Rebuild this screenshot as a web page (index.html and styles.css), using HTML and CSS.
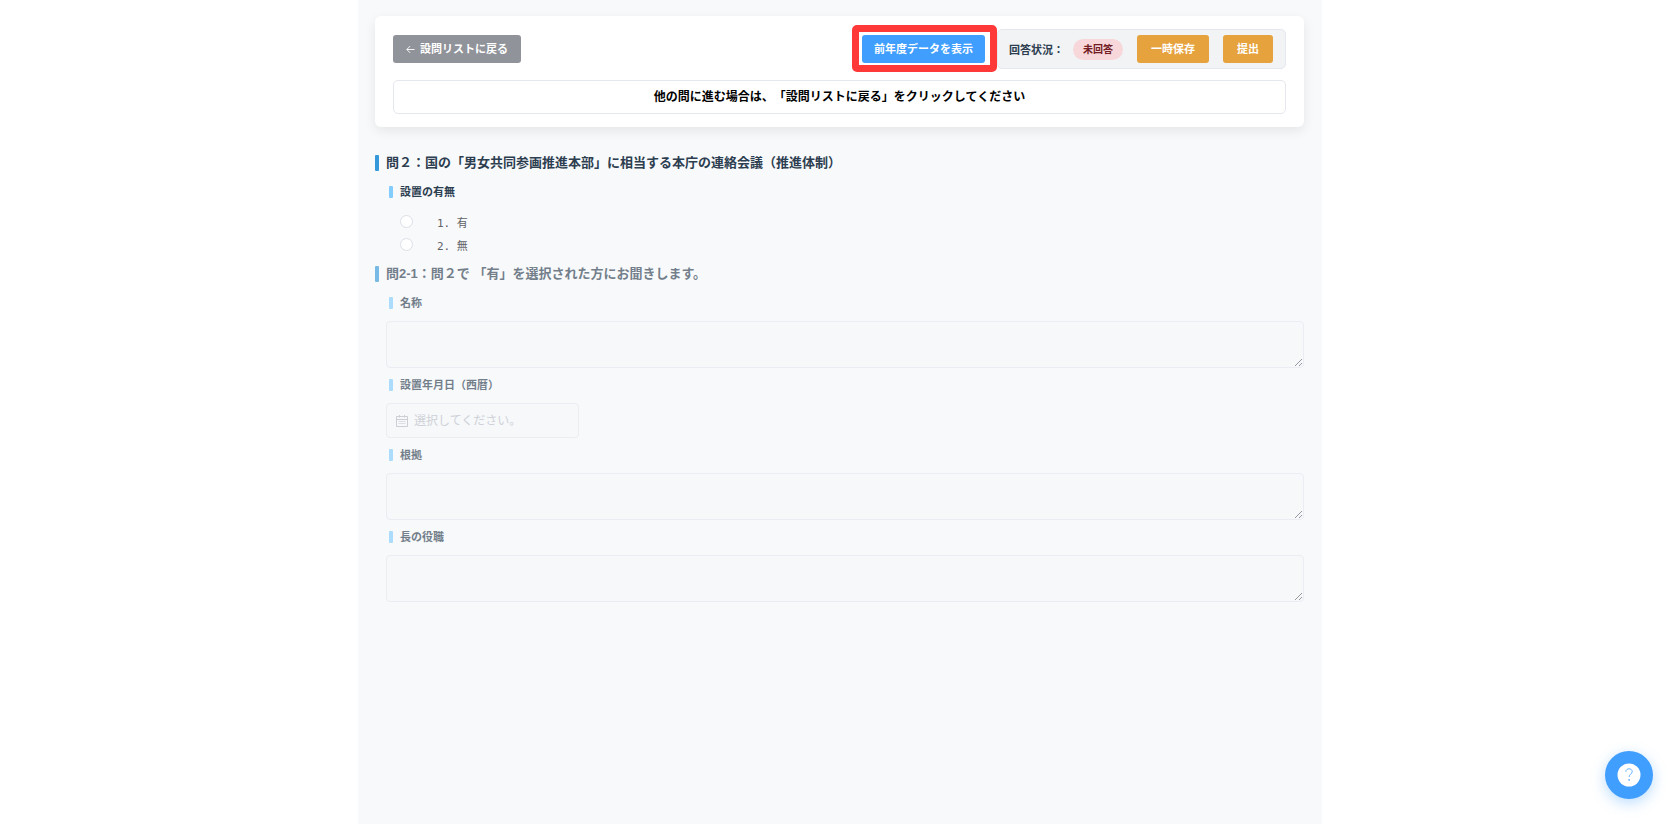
FILE: index.html
```html
<!DOCTYPE html>
<html lang="ja">
<head>
<meta charset="utf-8">
<meta name="viewport" content="width=device-width, initial-scale=1">
<title>問２</title>
<link rel="stylesheet" href="styles.css">
</head>
<body>
<main class="page">
  <header class="card">
    <div class="toolbar">
      <button type="button" class="btn btn-info">
        <svg class="arrow" viewBox="0 0 10 10" aria-hidden="true"><path d="M9.5 5H1M4.6 1.2L.9 5l3.7 3.8"/></svg>
        <span>設問リストに戻る</span>
      </button>
      <div class="actions">
        <div class="highlight"><button type="button" class="btn btn-primary">前年度データを表示</button></div>
        <div class="status">
          <span class="status-label">回答状況：</span>
          <span class="badge">未回答</span>
          <button type="button" class="btn btn-warning">一時保存</button>
          <button type="button" class="btn btn-warning">提出</button>
        </div>
      </div>
    </div>
    <p class="notice">他の問に進む場合は、「設問リストに戻る」をクリックしてください</p>
  </header>

  <section class="question">
    <h2 class="title">問２：国の「男女共同参画推進本部」に相当する本庁の連絡会議（推進体制）</h2>
    <fieldset class="choices">
      <legend class="label">設置の有無</legend>
      <label class="choice"><input type="radio" name="exists" class="radio"><span>1. 有</span></label>
      <label class="choice"><input type="radio" name="exists" class="radio"><span>2. 無</span></label>
    </fieldset>
  </section>

  <section class="question is-disabled">
    <h2 class="title">問2-1：問２で 「有」を選択された方にお聞きします。</h2>
    <div class="field">
      <label class="label" for="name">名称</label>
      <textarea id="name" class="area" disabled></textarea>
    </div>
    <div class="field">
      <label class="label" for="date">設置年月日（西暦）</label>
      <div class="date">
        <svg class="calendar" viewBox="0 0 12 12" aria-hidden="true"><path d="M.5 1.500h11v10H.5zM.5 4.500h11M3.500 0v2.500M8.500 0v2.500"/><path d="M2.500 6.500h7M2.500 8.500h7" opacity=".6"/></svg>
        <input id="date" class="date-input" type="text" placeholder="選択してください。" disabled>
      </div>
    </div>
    <div class="field">
      <label class="label" for="basis">根拠</label>
      <textarea id="basis" class="area" disabled></textarea>
    </div>
    <div class="field">
      <label class="label" for="chief">長の役職</label>
      <textarea id="chief" class="area" disabled></textarea>
    </div>
  </section>
</main>
<button type="button" class="help" aria-label="ヘルプ">
  <svg class="help-icon" viewBox="0 0 24 24" aria-hidden="true"><circle cx="12" cy="12" r="11.5" fill="#fff"/><path d="M8.8 8.8C8.9 6.8 10.2 5.8 12 5.8s3.2 1.100 3.200 2.800c0 2.400-3.100 2.600-3.100 5.400" fill="none" stroke="#409eff" stroke-width=".8"/><circle cx="12.100" cy="16.900" r=".8" fill="#409eff"/></svg>
</button>
</body>
</html>
```

FILE: styles.css
```css
* {
  box-sizing: border-box;
}

body {
  margin: 0;
  background: #fff;
  color: #2c3e50;
  font-family: "Liberation Sans", "Noto Sans CJK JP", sans-serif;
  font-size: 11px;
  text-spacing-trim: space-all;
}

button,
input,
textarea {
  font-family: inherit;
}

.page {
  max-width: 964px;
  min-height: 100vh;
  margin: 0 auto;
  padding: 16px 18px 16px 17px;
  background: #f8f9fb;
}

.card {
  margin-bottom: 28px;
  padding: 13px 18px;
  border-radius: 6px;
  background: #fff;
  box-shadow: 0 4px 12px rgba(0, 0, 0, 0.08);
}

.toolbar,
.actions,
.status {
  display: flex;
  align-items: center;
}

.toolbar {
  justify-content: space-between;
}

.actions {
  gap: 12px;
}

.btn {
  display: flex;
  align-items: center;
  justify-content: center;
  gap: 5px;
  height: 28px;
  padding: 0 13px;
  border: 0;
  border-radius: 3px;
  color: #fff;
  font-size: 11px;
  font-weight: 700;
  line-height: 16px;
  white-space: nowrap;
  cursor: pointer;
}

.btn-info {
  background: #909399;
}

.btn-primary {
  padding: 0 12px;
  background: #409eff;
}

.btn-warning {
  padding: 0 14px;
  background: #e6a23c;
}

.arrow {
  width: 9px;
  height: 9px;
  fill: none;
  stroke: #fff;
  stroke-width: 1;
}

.highlight {
  position: relative;
}

.highlight::after {
  content: "";
  position: absolute;
  inset: -10px -12px -9px -10px;
  border: 7px solid #ff3838;
  border-radius: 5px;
  pointer-events: none;
}

.status {
  gap: 14px;
  height: 40px;
  padding: 0 12px 0 11px;
  border: 1px solid #e4e7ed;
  border-radius: 5px;
  background: #f1f3f5;
}

.status-label {
  margin-right: -5px;
  font-weight: 700;
}

.badge {
  padding: 0 10px;
  border-radius: 11px;
  background: #f8d7da;
  color: #721c24;
  font-size: 10px;
  font-weight: 700;
  line-height: 21px;
}

.notice {
  margin: 11px 0 0;
  padding: 7px 12px;
  border: 1px solid #e4e7ed;
  border-radius: 5px;
  color: #000;
  font-size: 12px;
  font-weight: 700;
  line-height: 18px;
  text-align: center;
}

.title,
.label {
  display: flex;
  align-items: center;
  font-weight: 700;
}

.title::before,
.label::before {
  content: "";
  width: 4px;
  border-radius: 1px;
}

.title {
  gap: 7px;
  margin: 0 0 15px;
  font-size: 13px;
  line-height: 16px;
}

.title::before {
  height: 16px;
  background: #3498db;
}

.label {
  gap: 7px;
  margin: 0 0 12px;
  padding: 0 0 0 3px;
  font-size: 11px;
  line-height: 12px;
}

.label::before {
  height: 12px;
  background: #82ccff;
}

.choices {
  margin: 0 0 10px 11px;
  padding: 0;
  border: 0;
}

.choice {
  display: flex;
  align-items: center;
  gap: 24px;
  height: 23px;
  padding-left: 14px;
  color: #606266;
  font-family: "DejaVu Sans Mono", "Noto Sans CJK JP", monospace;
}

.radio {
  appearance: none;
  width: 13px;
  height: 13px;
  margin: 0;
  border: 1px solid #dcdfe6;
  border-radius: 50%;
  background: #fff;
}

.is-disabled {
  opacity: 0.65;
}

.field {
  margin: 0 0 11px 11px;
}

.area {
  display: block;
  width: 100%;
  height: 47px;
  border: 1px solid #e4e7ed;
  border-radius: 4px;
  background: #f6f8fa;
  resize: vertical;
}

.date {
  display: flex;
  align-items: center;
  gap: 6px;
  width: 193px;
  height: 35px;
  padding: 0 9px;
  border: 1px solid #e4e7ed;
  border-radius: 4px;
  background: #f6f8fa;
}

.calendar {
  flex: none;
  width: 12px;
  height: 12px;
  fill: none;
  stroke: #b4b8c0;
  stroke-width: 1;
}

.date-input {
  flex: 1;
  min-width: 0;
  padding: 0;
  border: 0;
  background: transparent;
  font-size: 12px;
}

.date-input::placeholder {
  color: #b8bcc5;
}

.help {
  position: fixed;
  right: 27px;
  bottom: 25px;
  display: grid;
  place-items: center;
  width: 48px;
  height: 48px;
  padding: 0;
  border: 0;
  border-radius: 50%;
  background: #409eff;
  box-shadow: 0 4px 14px rgba(64, 158, 255, 0.35);
  cursor: pointer;
}

.help-icon {
  width: 24px;
  height: 24px;
}
```
